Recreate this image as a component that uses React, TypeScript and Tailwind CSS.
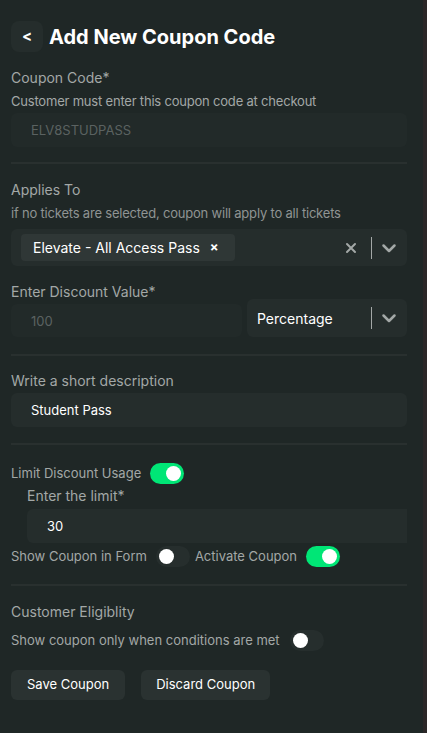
import React, { useState } from 'react';

const Toggle: React.FC<{ on: boolean; onClick?: () => void }> = ({ on, onClick }) => (
  <button
    onClick={onClick}
    className={`w-[34px] h-[21px] rounded-full flex items-center px-[3px] shrink-0 ${on ? 'bg-[#00e676] justify-end' : 'bg-[#262e2d] justify-start'}`}
  >
    <span className="w-[15px] h-[15px] rounded-full bg-white block" />
  </button>
);

const Chevron = () => (
  <svg width="24" height="24" viewBox="0 0 24 24" fill="none" stroke="#a3a8a7" strokeWidth="2.5" strokeLinecap="round" strokeLinejoin="round">
    <path d="M6.5 9.5l5.5 5.5 5.5-5.5" />
  </svg>
);

const Divider = () => <div className="h-[2px] bg-[#29302f]" />;

const App: React.FC = () => {
  const [limit, setLimit] = useState(true);
  const [showInForm, setShowInForm] = useState(false);
  const [active, setActive] = useState(true);
  const [conditional, setConditional] = useState(false);

  return (
    <div className="min-h-[733px] w-[427px] bg-[#1f2726] flex text-[#a3a8a7]" style={{ fontFamily: 'Inter, "Noto Sans", sans-serif' }}>
      <div className="flex-1 min-w-0 pl-[11px] pr-[16px] pt-[21px]">
        <div className="overflow-hidden">
          <header className="flex items-center gap-[6px]">
            <button className="w-[32px] h-[31px] rounded-lg bg-[#252d2c] text-white text-[15px] font-bold flex items-center justify-center">&lt;</button>
            <h1 className="text-[20px] font-bold text-white">Add New Coupon Code</h1>
          </header>

          <p className="text-[14px] leading-[18px] mt-[17px]">Coupon Code*</p>
          <p className="text-[13px] leading-[16px] mt-[6px] tracking-[-0.2px]">Customer must enter this coupon code at checkout</p>
          <input
            placeholder="ELV8STUDPASS"
            className="mt-[4px] w-full h-[34px] rounded-md bg-[#222a29] px-[20px] text-[13px] placeholder-[#5b6261] outline-none"
          />

          <div className="mt-[15px]"><Divider /></div>

          <p className="text-[14px] leading-[18px] mt-[17px]">Applies To</p>
          <p className="text-[13px] leading-[16px] mt-[6px] tracking-[-0.2px] text-[#8f9493]">if no tickets are selected, coupon will apply to all tickets</p>
          <div className="mt-[8px] h-[37px] rounded-md bg-[#252d2c] flex items-center pl-[10px] pr-[6px]">
            <div className="h-[27px] rounded bg-[#2f3736] flex items-center pl-[12px] pr-[16px] text-[14px] text-white">
              Elevate - All Access Pass
              <span className="ml-[10px] text-[13px] font-bold">×</span>
            </div>
            <div className="flex-1" />
            <svg width="12" height="12" viewBox="0 0 24 24" stroke="#a3a8a7" strokeWidth="4" strokeLinecap="round">
              <path d="M4 4l16 16M20 4L4 20" />
            </svg>
            <div className="w-px h-[22px] bg-[#a3a8a7] ml-[14px] mr-[5px]" />
            <Chevron />
          </div>

          <p className="text-[14px] leading-[18px] mt-[17px]">Enter Discount Value*</p>
          <div className="flex items-end gap-[5px] mt-[-2px]">
            <input
              placeholder="100"
              className="w-[231px] h-[33px] rounded-md bg-[#222a29] px-[20px] text-[13px] placeholder-[#5b6261] outline-none"
            />
            <div className="flex-1 h-[38px] rounded-md bg-[#252d2c] flex items-center pl-[10px] pr-[6px] text-[14px] text-white">
              Percentage
              <div className="flex-1" />
              <div className="w-px h-[22px] bg-[#a3a8a7] mr-[5px]" />
              <Chevron />
            </div>
          </div>

          <div className="mt-[17px]"><Divider /></div>

          <p className="text-[14px] leading-[18px] mt-[16px]">Write a short description</p>
          <input
            defaultValue="Student Pass"
            className="mt-[3px] w-full h-[34px] rounded-md bg-[#252d2c] px-[20px] text-[13px] text-white outline-none"
          />

          <div className="mt-[16px]"><Divider /></div>

          <div className="mt-[18px] flex items-center gap-[9px]">
            <span className="text-[13px]">Limit Discount Usage</span>
            <Toggle on={limit} onClick={() => setLimit(!limit)} />
          </div>
          <div className="pl-[16px] mt-[3px]">
            <p className="text-[14px] leading-[18px]">Enter the limit*</p>
            <input
              defaultValue="30"
              className="mt-[4px] w-[390px] h-[34px] rounded-md bg-[#252d2c] px-[20px] text-[13px] text-white outline-none"
            />
          </div>

          <div className="mt-[3px] flex items-center">
            <span className="text-[13px]">Show Coupon in Form</span>
            <span className="ml-[9px] flex"><Toggle on={showInForm} onClick={() => setShowInForm(!showInForm)} /></span>
            <span className="text-[13px] ml-[5px]">Activate Coupon</span>
            <span className="ml-[9px] flex"><Toggle on={active} onClick={() => setActive(!active)} /></span>
          </div>

          <div className="mt-[17px]"><Divider /></div>

          <p className="text-[14px] leading-[18px] mt-[17px]">Customer Eligiblity</p>
          <div className="mt-[9px] flex items-center gap-[10px]">
            <span className="text-[13px]">Show coupon only when conditions are met</span>
            <Toggle on={conditional} onClick={() => setConditional(!conditional)} />
          </div>

          <div className="mt-[19px] flex gap-[16px]">
            <button className="h-[30px] px-[16px] rounded-md bg-[#2a3231] text-[13px] text-white">Save Coupon</button>
            <button className="h-[30px] px-[15px] rounded-md bg-[#2a3231] text-[13px] text-white">Discard Coupon</button>
          </div>
        </div>
      </div>
      <div className="w-[4px] bg-[#2b2727]" />
    </div>
  );
};

export default App;
